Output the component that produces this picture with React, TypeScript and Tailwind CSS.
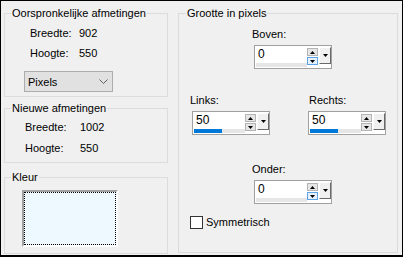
import React from "react";

const Tri = ({ up, color = "#000" }: { up?: boolean; color?: string }) => (
  <svg width="5" height="3" viewBox="0 0 5 3">
    <polygon points={up ? "0,3 5,3 2.5,0" : "0,0 5,0 2.5,3"} fill={color} />
  </svg>
);

const SpinBox = ({ value, bar, focusDown }: { value: string; bar: number; focusDown?: boolean }) => (
  <div className="w-[78px] h-[24px] border border-[#a0a0a0] bg-white flex">
    {/* text + progress strip */}
    <div className="w-[52px] flex flex-col">
      <div className="h-[17px] pl-[3px] leading-[17px] text-[12px] text-[#000]">{value}</div>
      <div className="h-[4px] bg-[#e6e6e6] ml-[1px]">
        <div className="h-full bg-[#0078d7]" style={{ width: bar }} />
      </div>
    </div>
    {/* spin arrows */}
    <div className="w-[11px] mt-[2px] flex flex-col gap-[1px]">
      <div className="h-[8px] border border-[#b4b4b4] bg-[#e6e6e6] flex items-center justify-center">
        <Tri up />
      </div>
      <div
        className={
          focusDown
            ? "h-[8px] border border-[#5ea3e6] bg-[#e5f1fb] flex items-center justify-center"
            : "h-[8px] border border-[#b4b4b4] bg-[#e6e6e6] flex items-center justify-center"
        }
      >
        <Tri />
      </div>
    </div>
    {/* dropdown button */}
    <div className="ml-[1px] mt-[1px] w-[12px] h-[17px] bg-[#f0f0f0] border border-t-white border-l-white border-r-[#696969] border-b-[#696969] flex items-center justify-center">
      <Tri />
    </div>
  </div>
);

export default function App() {
  return (
    <div className="w-[403px] h-[257px] bg-[#f0f0f0] border border-black border-b-2 flex gap-[10px] pl-[3px] pt-[5px] font-['Liberation_Sans',sans-serif] text-[11px] leading-[14px] text-black">
      {/* left column */}
      <div className="w-[164px] flex flex-col">
        <fieldset className="h-[91px] border border-[#dcdcdc]">
          <legend className="ml-[6px] px-[1px]">Oorspronkelijke afmetingen</legend>
          <div className="mt-[6px] pl-[25px] flex">
            <span className="w-[49px]">Breedte:</span>
            <span>902</span>
          </div>
          <div className="mt-[6px] pl-[25px] flex">
            <span className="w-[49px]">Hoogte:</span>
            <span>550</span>
          </div>
          <div className="mt-[11px] ml-[19px] w-[89px] h-[21px] border border-[#adadad] bg-[#e1e1e1] flex items-center justify-between pl-[3px] pr-[4px]">
            <span>Pixels</span>
            <svg width="9" height="5" viewBox="0 0 9 5">
              <polyline points="0.5,0.5 4.5,4.5 8.5,0.5" fill="none" stroke="#606060" strokeWidth="1" />
            </svg>
          </div>
        </fieldset>

        <fieldset className="mt-[4px] h-[62px] border border-[#dcdcdc]">
          <legend className="ml-[6px] px-[1px]">Nieuwe afmetingen</legend>
          <div className="mt-[5px] pl-[20px] flex">
            <span className="w-[55px]">Breedte:</span>
            <span>1002</span>
          </div>
          <div className="mt-[7px] pl-[20px] flex">
            <span className="w-[55px]">Hoogte:</span>
            <span>550</span>
          </div>
        </fieldset>

        <fieldset className="mt-[7px] h-[84px] border border-[#dcdcdc]">
          <legend className="ml-[6px] px-[1px]">Kleur</legend>
          <div className="mt-[6px] ml-[17px] w-[96px] h-[57px] border-2 border-t-[#a0a0a0] border-l-[#a0a0a0] border-r-white border-b-white">
            <div className="w-full h-full border border-dotted border-black bg-[#eef8ff]" />
          </div>
        </fieldset>
      </div>

      {/* right group */}
      <fieldset className="w-[220px] h-[247px] border border-[#dcdcdc]">
        <legend className="ml-[7px] px-[1px]">Grootte in pixels</legend>

        <div className="mt-[7px] ml-[73px]">Boven:</div>
        <div className="mt-[4px] ml-[75px]">
          <SpinBox value="0" bar={0} focusDown />
        </div>

        <div className="mt-[24px] ml-[11px] flex">
          <div className="w-[118px]">
            <div>Links:</div>
            <div className="mt-[4px] ml-[2px]">
              <SpinBox value="50" bar={28} />
            </div>
          </div>
          <div>
            <div className="ml-[1px]">Rechts:</div>
            <div className="mt-[4px]">
              <SpinBox value="50" bar={28} />
            </div>
          </div>
        </div>

        <div className="mt-[27px] ml-[73px]">Onder:</div>
        <div className="mt-[4px] ml-[75px]">
          <SpinBox value="0" bar={0} focusDown />
        </div>

        <div className="mt-[11px] ml-[11px] flex items-center">
          <div className="w-[13px] h-[13px] border border-[#333333] bg-white" />
          <span className="ml-[3px]">Symmetrisch</span>
        </div>
      </fieldset>
    </div>
  );
}
